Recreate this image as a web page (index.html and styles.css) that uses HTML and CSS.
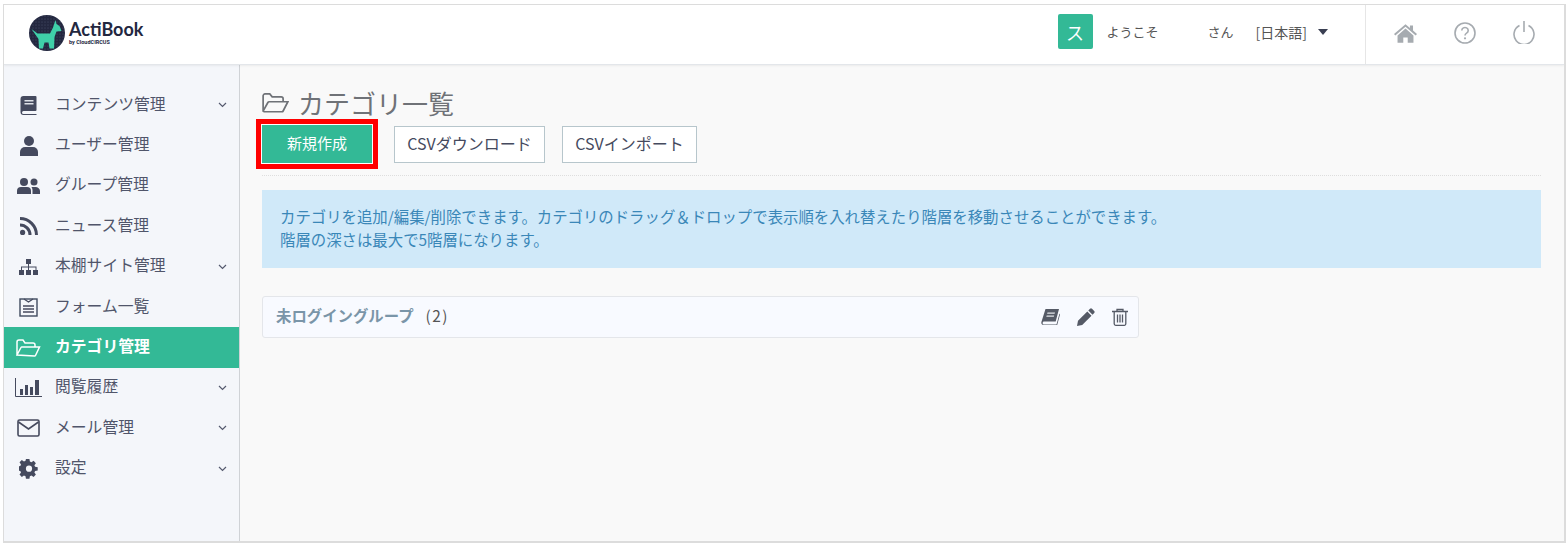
FILE: index.html
```html
<!DOCTYPE html>
<html lang="ja">
<head>
<meta charset="utf-8">
<title>ActiBook</title>
<link rel="stylesheet" href="styles.css">
</head>
<body>
<div class="frame">
  <header class="topbar">
    <div class="logo">
      <svg class="logo-mark" width="36" height="36" viewBox="0 0 36 36"><defs><pattern id="dots" width="3" height="3" patternUnits="userSpaceOnUse"><circle cx="1" cy="1" r=".45" fill="#6d7190"/></pattern></defs><circle cx="18" cy="18" r="18" fill="#23273f"/><circle cx="18" cy="18" r="18" fill="url(#dots)"/><path d="M2.500 14l6 4.500 12.500 0 3-6 2.500-7.500 1 4 3 2 2 5-5 .5-2 5.500-.5 11.500h-4.500l-1-6h-4l-1.500 6h-4l-.5-9.500z" fill="#3fd0a9"/></svg>
      <div class="logo-text"><span class="logo-name">ActiBook</span><span class="logo-by">by CloudCIRCUS</span></div>
    </div>
    <div class="user">
      <span class="avatar">ス</span>
      <span class="welcome">ようこそ</span>
      <span class="san">さん</span>
      <span class="lang">[日本語]</span>
      <svg class="caret" width="10" height="6" viewBox="0 0 10 6"><path d="M0 0h10L5 6z" fill="#3a3f52"/></svg>
    </div>
    <nav class="top-icons">
      <svg width="23" height="20" viewBox="0 0 26 22"><path d="M13 1l5 4.300V2.500h3.500v5.800L26 12.200l-1.500 1.500L13 3.800 1.500 13.700 0 12.200z" fill="#a6abb0"/><path d="M13 6l9 7.700V22h-6.500v-6h-5v6H4v-8.300z" fill="#a6abb0"/></svg>
      <svg width="22" height="22" viewBox="0 0 22 22"><circle cx="11" cy="11" r="10" fill="none" stroke="#a6abb0" stroke-width="1.600"/><path d="M7.800 8.500a3.200 3 0 1 1 4.800 2.600c-1.100.7-1.600 1.200-1.600 2.400" fill="none" stroke="#a6abb0" stroke-width="1.600"/><circle cx="11" cy="16.300" r="1.100" fill="#a6abb0"/></svg>
      <svg width="22" height="23" viewBox="0 0 22 23"><path d="M6.500 4.500a10 10 0 1 0 9 0" fill="none" stroke="#a6abb0" stroke-width="1.600"/><path d="M11 0v11" stroke="#a6abb0" stroke-width="1.600"/></svg>
    </nav>
  </header>
  <div class="body">
    <aside class="sidebar">
      <ul class="menu">
        <li class="item"><span class="ico"><svg width="17" height="19" viewBox="0 0 16 19"><path d="M3 0h12a1 1 0 0 1 1 1v13a1 1 0 0 1-1 1H3a1.500 1.500 0 0 0 0 3h13v1H3a3 3 0 0 1-3-3V3a3 3 0 0 1 3-3z" fill="#454a5e"/><path d="M4 4h9v1.500H4zM4 7h9v1.500H4z" fill="#dfe2e8"/></svg></span><span class="label">コンテンツ管理</span><svg class="chev" width="9" height="6" viewBox="0 0 9 6"><path d="M1 1l3.500 3.500L8 1" fill="none" stroke="#555a6e" stroke-width="1.200"/></svg></li>
        <li class="item"><span class="ico"><svg width="18" height="20" viewBox="0 0 18 20"><circle cx="9" cy="5" r="5" fill="#454a5e"/><path d="M0 20v-4a5 5 0 0 1 5-5h8a5 5 0 0 1 5 5v4z" fill="#454a5e"/></svg></span><span class="label">ユーザー管理</span></li>
        <li class="item"><span class="ico"><svg width="23" height="16" viewBox="0 0 23 16"><circle cx="7" cy="4" r="4" fill="#454a5e"/><circle cx="17" cy="4" r="3.500" fill="#454a5e"/><path d="M0 16v-3a4 4 0 0 1 4-4h6a4 4 0 0 1 4 4v3z" fill="#454a5e"/><path d="M15.500 16v-4c0-1-.4-2-1-3h4a4.500 4 0 0 1 4.500 4v3z" fill="#454a5e"/></svg></span><span class="label">グループ管理</span></li>
        <li class="item"><span class="ico"><svg width="18" height="18" viewBox="0 0 18 18"><circle cx="2.600" cy="15.400" r="2.600" fill="#454a5e"/><path d="M0 6.500a11.500 11.500 0 0 1 11.500 11.500h-3A8.500 8.500 0 0 0 0 9.500z" fill="#454a5e"/><path d="M0 0a18 18 0 0 1 18 18h-3A15 15 0 0 0 0 3z" fill="#454a5e"/></svg></span><span class="label">ニュース管理</span></li>
        <li class="item"><span class="ico"><svg width="19" height="16" viewBox="0 0 19 16"><path d="M7 0h5v5H7zM0 11h5v5H0zM7 11h5v5H7zM14 11h5v5h-5z" fill="#454a5e"/><path d="M9 5h1v2.500h7.500V11h-1V8.500h-6.500V11H9V8.500H3V11H2V7.500h7z" fill="#454a5e"/></svg></span><span class="label">本棚サイト管理</span><svg class="chev" width="9" height="6" viewBox="0 0 9 6"><path d="M1 1l3.500 3.500L8 1" fill="none" stroke="#555a6e" stroke-width="1.200"/></svg></li>
        <li class="item"><span class="ico"><svg width="19" height="19" viewBox="0 0 19 19"><rect x="1" y="1" width="17" height="17" fill="none" stroke="#3f4a5e" stroke-width="1.400"/><path d="M5 1l4.500 3L14 1M4 8h11M4 11h11M4 14h11" fill="none" stroke="#454a5e" stroke-width="1.300"/></svg></span><span class="label">フォーム一覧</span></li>
        <li class="item active"><span class="ico"><svg width="25" height="18" viewBox="0 0 25 18"><path d="M1 16V3a2 2 0 0 1 2-2h4l2 3h8a2 2 0 0 1 2 2v2M1 16l4-7.500a1 1 0 0 1 1-.5h17.500l-4 8.500a1 1 0 0 1-1 .5z" fill="none" stroke="#fff" stroke-width="1.500"/></svg></span><span class="label">カテゴリ管理</span></li>
        <li class="item"><span class="ico"><svg width="27" height="19" viewBox="0 0 27 19"><path d="M.500 0v18.500H27" fill="none" stroke="#454a5e"/><path d="M5 11h3v6H5zM10 7h3v10h-3zM15 9h3v8h-3zM20 2h4v15h-4z" fill="#454a5e"/></svg></span><span class="label">閲覧履歴</span><svg class="chev" width="9" height="6" viewBox="0 0 9 6"><path d="M1 1l3.500 3.500L8 1" fill="none" stroke="#555a6e" stroke-width="1.200"/></svg></li>
        <li class="item"><span class="ico"><svg width="23" height="18" viewBox="0 0 23 18"><rect x="1" y="1" width="21" height="16" rx="1.500" fill="none" stroke="#454a5e" stroke-width="1.600"/><path d="M1.500 3l10 7 10-7" fill="none" stroke="#454a5e" stroke-width="1.600"/></svg></span><span class="label">メール管理</span><svg class="chev" width="9" height="6" viewBox="0 0 9 6"><path d="M1 1l3.500 3.500L8 1" fill="none" stroke="#555a6e" stroke-width="1.200"/></svg></li>
        <li class="item"><span class="ico"><svg width="20" height="20" viewBox="0 0 20 20"><path d="M8 0h4l.5 3 1.800.8 2.500-1.700 2.600 2.700-1.700 2.400.8 1.800 3 .5v3.700l-3 .5-.8 1.800 1.700 2.400-2.600 2.700-2.500-1.700-1.800.8-.5 3H8l-.5-3-1.800-.8-2.500 1.700-2.600-2.700 1.700-2.400-.8-1.800-3-.5V8.500l3-.5.8-1.800L.6 3.800 3.200 1.100l2.500 1.700L7.500 2z" transform="translate(0 0) scale(.87)" fill="#454a5e"/><circle cx="10" cy="9.700" r="3.100" fill="#f4f6fa"/></svg></span><span class="label">設定</span><svg class="chev" width="9" height="6" viewBox="0 0 9 6"><path d="M1 1l3.500 3.500L8 1" fill="none" stroke="#555a6e" stroke-width="1.200"/></svg></li>
      </ul>
    </aside>
    <main class="content">
      <h1 class="title"><svg width="27" height="20" viewBox="0 0 28 21"><path d="M1 19V3a2 2 0 0 1 2-2h5l2.500 3H20a2 2 0 0 1 2 2v3M1 19l5-9a1.500 1.500 0 0 1 1.300-.8H27l-5 9.700a1.500 1.500 0 0 1-1.300.8H2z" fill="none" stroke="#6f7277" stroke-width="1.800"/></svg><span>カテゴリ一覧</span></h1>
      <div class="actions">
        <button class="btn primary">新規作成</button>
        <button class="btn csv-down">CSVダウンロード</button>
        <button class="btn csv-imp">CSVインポート</button>
      </div>
      <div class="alert">カテゴリを追加/編集/削除できます。カテゴリのドラッグ＆ドロップで表示順を入れ替えたり階層を移動させることができます。<br>階層の深さは最大で5階層になります。</div>
      <div class="card">
        <span class="group-name">未ログイングループ</span><span class="group-count">(2)</span>
        <div class="card-icons">
          <svg width="19" height="17" viewBox="0 0 19 17"><path d="M4.500 0H18l-3.300 12.500H3.200a1.500 1.500 0 0 0-.2 3h12.500l3-11 .5 1-2.800 10.500H2.500C.8 16 0 14.500.4 13z" fill="#555a66"/><path d="M6.500 3.500h7.500l-.4 1.300H6.100zM5.700 6.500h7.500l-.4 1.300H5.300z" fill="#e4e6ea"/></svg>
          <svg width="18" height="18" viewBox="0 0 18 18"><path d="M13 .8a1.500 1.500 0 0 1 2 0l2.200 2.200a1.500 1.500 0 0 1 0 2L15.500 6.700 11.300 2.500zM10.300 3.500l4.200 4.200-9.300 9.300L0 18l1-5.200z" fill="#555a66"/></svg>
          <svg width="16" height="18" viewBox="0 0 16 18"><path d="M0 3.500h16M5 3.500V1.500h6v2M2.200 3.500v12.300a1.500 1.500 0 0 0 1.500 1.500h8.600a1.500 1.500 0 0 0 1.500-1.500V3.500M5.500 6.500v8M8 6.500v8M10.500 6.500v8" fill="none" stroke="#555a66" stroke-width="1.300"/></svg>
        </div>
      </div>
    </main>
  </div>
</div>
</body>
</html>
```
FILE: styles.css
```css
* { box-sizing: border-box; }
html, body { margin: 0; padding: 0; }
body {
  background: #fff;
  font-family: "Noto Sans CJK JP", "Noto Sans", sans-serif;
  color: #454a5e;
}
.frame {
  margin: 4px 2px 0 3px;
  height: 539px;
  border: 1px solid #dcdcdc;
  border-width: 1px 2px 2px 1px;
  display: flex;
  flex-direction: column;
  overflow: hidden;
}
.topbar {
  height: 60px;
  flex: none;
  display: flex;
  align-items: center;
  background: #fff;
  border-bottom: 1px solid #e3e6ea;
  box-shadow: 0 1px 2px rgba(0,0,0,.06);
  position: relative;
}
.logo { display: flex; align-items: center; gap: 4px; margin-left: 25px; padding-bottom: 4px; }
.logo-mark { display: block; }
.logo-text { display: flex; flex-direction: column; }
.logo-name { font: 700 18px/20px Lato, sans-serif; color: #23273f; margin-top: -1px; }
.logo-by { font: 700 5.500px/6px Roboto, sans-serif; color: #23273f; }
.user { margin-left: auto; display: flex; align-items: center; height: 100%; padding-bottom: 6px; font-size: 13px; color: #555; }
.avatar {
  width: 35px; height: 35px; background: #33b996; color: #fff; border-radius: 2px;
  display: flex; align-items: center; justify-content: center; font-size: 18px;
}
.welcome { margin-left: 14px; }
.san { margin-left: 49px; }
.lang { margin-left: 22px; font-size: 14px; }
.caret { margin-left: 11px; }
.top-icons {
  width: 199px;
  margin-left: 37px;
  height: 100%;
  border-left: 1px solid #e6e6e6;
  display: flex;
  align-items: center;
  justify-content: space-between;
  padding: 0 29px 4px 28px;
}
.body { flex: 1; display: flex; min-height: 0; }
.sidebar {
  width: 236px;
  flex: none;
  background: #f4f6fa;
  border-right: 1px solid #cfd2d6;
  padding-top: 20px;
}
.menu { list-style: none; margin: 0; padding: 0; }
.item {
  height: 40.400px;
  display: flex;
  align-items: center;
  padding: 0 12px 0 0;
  font-size: 15.800px;
  color: #50556a;
}
.ico { width: 51px; flex: none; display: flex; justify-content: center; padding-right: 2px; }
.label { flex: 1; white-space: nowrap; padding-bottom: 4px; }
.active { background: #33b996; color: #fff; font-weight: 700; }
.content { flex: 1; background: #f9f9f9; padding: 19px 23px 0 22px; min-width: 0; }
.title {
  margin: 0;
  height: 42px;
  display: flex;
  align-items: center;
  gap: 9px;
  padding-bottom: 5px;
  font-size: 26px;
  font-weight: 400;
  line-height: 36px;
  color: #6f7277;
}
.actions {
  display: flex;
  gap: 17px;
  height: 50px;
  padding-bottom: 13px;
  border-bottom: 1px dotted #dedede;
}
.btn {
  height: 37px;
  font-family: inherit;
  font-size: 16px;
  background: #fff;
  color: #454a5e;
  border: 1px solid #b7c6cc;
  padding: 0 0 4px;
}
.primary {
  width: 110px;
  height: 38px;
  margin-top: -1px;
  margin-right: 5px;
  background: #33b996;
  border: 0;
  color: #fff;
  font-size: 15px;
  box-shadow: 0 0 0 1px #fff, 0 0 0 6px #f00;
}
.csv-down { width: 151px; }
.csv-imp { width: 135px; }
.alert {
  margin-top: 14px;
  height: 78px;
  background: #d0e9f9;
  color: #3a87b8;
  font-size: 15.400px;
  line-height: 23px;
  padding: 15px 18px 0;
}
.card {
  margin-top: 28px;
  width: 877px;
  height: 42px;
  background: #f8faff;
  border: 1px solid #e4e6ea;
  border-radius: 3px;
  display: flex;
  align-items: center;
  padding: 0 10px 0 13px;
  font-size: 15.400px;
}
.group-name { font-weight: 700; color: #7a95a8; padding-bottom: 4px; }
.group-count { margin-left: 12px; color: #555; letter-spacing: 1.500px; padding-bottom: 4px; }
.card-icons { margin-left: auto; display: flex; align-items: center; gap: 17px; }
```
